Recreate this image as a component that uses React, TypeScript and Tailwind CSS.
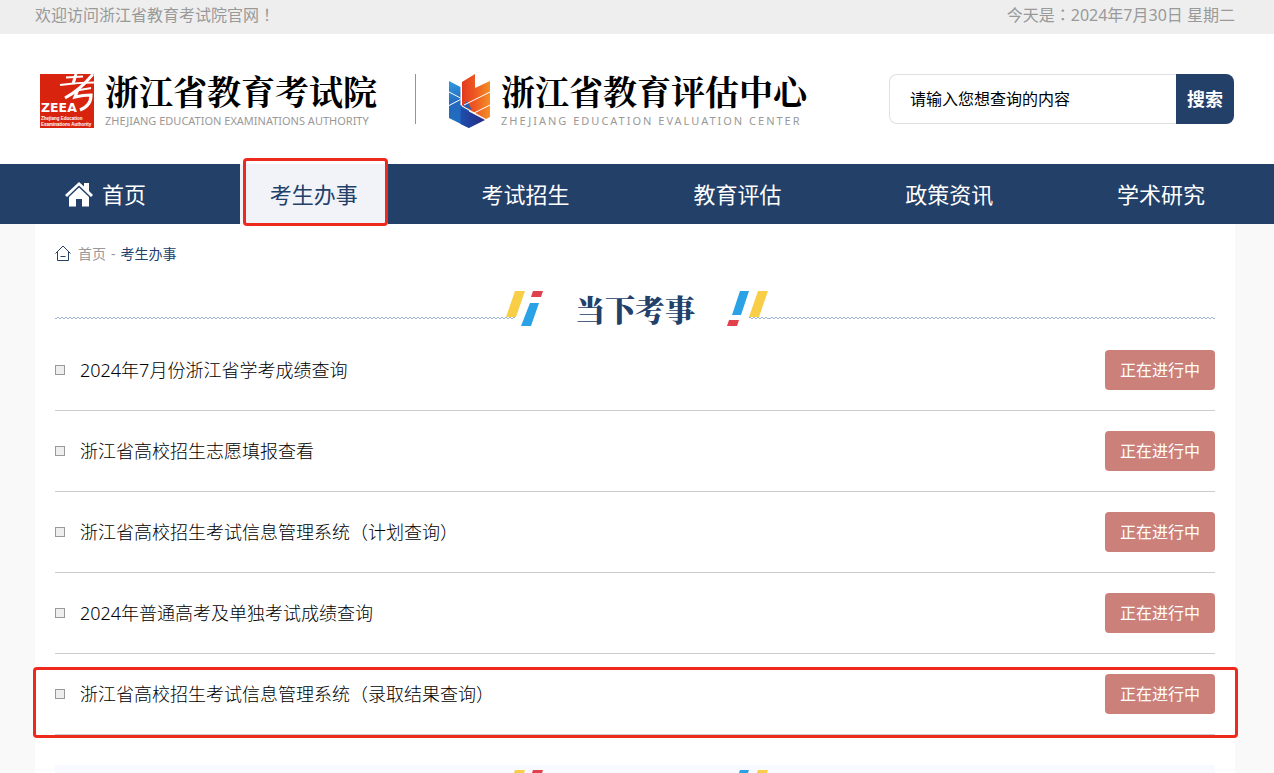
import React from 'react';

const navItems = ['考生办事', '考试招生', '教育评估', '政策资讯', '学术研究'];

const exams = [
  '2024年7月份浙江省学考成绩查询',
  '浙江省高校招生志愿填报查看',
  '浙江省高校招生考试信息管理系统（计划查询）',
  '2024年普通高考及单独考试成绩查询',
  '浙江省高校招生考试信息管理系统（录取结果查询）',
];

const serif = "font-['Noto_Serif_CJK_SC','Noto_Serif_SC','Liberation_Serif','Noto_Sans_CJK_SC',serif]";

function ZeeaLogo() {
  return (
    <svg width="54" height="54" viewBox="0 0 54 54" aria-hidden="true" className="shrink-0">
      <rect width="54" height="54" fill="#d8230f" />
      <g fill="none" stroke="#fff" strokeLinecap="butt">
        <path d="M26 3.500L43 2.500" strokeWidth="1.800" />
        <path d="M20 11C31 9.500 43 8.500 54 8.500" strokeWidth="2" />
        <path d="M36 0L33 10" strokeWidth="3" />
        <path d="M53 0C45 10 36 18 25 24" strokeWidth="3" />
        <path d="M35 17C41 15.500 46 15 51 14" strokeWidth="1.800" />
        <path d="M38 15L35 23C41 21.500 46 21 51 21C51 28 48 33 40 36" strokeWidth="3.200" />
      </g>
      <text x="1" y="38" fill="#fff" fontSize="12.500" fontWeight="700" fontFamily="DejaVu Sans">ZEEA</text>
      <text x="1" y="46" fill="#fff" fontSize="4.500" fontWeight="700" fontFamily="Liberation Sans">Zhejiang Education</text>
      <text x="1" y="52" fill="#fff" fontSize="4.500" fontWeight="700" fontFamily="Liberation Sans">Examinations Authority</text>
    </svg>
  );
}

function CenterLogo() {
  return (
    <svg width="42" height="54" viewBox="0 0 42 54" aria-hidden="true" className="shrink-0">
      <defs>
        <linearGradient id="blueFace" x1="0" y1="7" x2="12" y2="54" gradientUnits="userSpaceOnUse">
          <stop offset="0" stopColor="#2f9be0" />
          <stop offset="0.500" stopColor="#2468bd" />
          <stop offset="1" stopColor="#1d70c4" />
        </linearGradient>
        <linearGradient id="darkFace" x1="12" y1="0" x2="37" y2="0" gradientUnits="userSpaceOnUse">
          <stop offset="0" stopColor="#1f4fae" />
          <stop offset="1" stopColor="#252a80" />
        </linearGradient>
        <linearGradient id="orangeFace" x1="13" y1="0" x2="42" y2="0" gradientUnits="userSpaceOnUse">
          <stop offset="0" stopColor="#e2361f" />
          <stop offset="0.500" stopColor="#ee5a22" />
          <stop offset="1" stopColor="#f58f27" />
        </linearGradient>
      </defs>
      <path d="M1 7L12.500 13V31L21 36V54L1 44Z" fill="url(#blueFace)" />
      <path d="M12.500 33L37 46L21 54L12.500 50Z" fill="url(#darkFace)" />
      <path d="M14 8L27 0V14L42 7V43L37 45.500L15 32.500L14 31Z" fill="url(#orangeFace)" />
      <path d="M15 32L19 27L24 36Z" fill="#2360b5" />
      <path d="M1 18L12.500 24M1 31.500L12.500 25.500M42 18L16 31M42 31L26 39M14 32L38 45.500" stroke="#fff" strokeWidth="1" fill="none" />
    </svg>
  );
}

function LeftMarks() {
  return (
    <svg width="42" height="44" viewBox="0 0 42 44" aria-hidden="true" className="shrink-0">
      <path d="M0 31.500H14" stroke="#9db4d6" strokeDasharray="2 2" />
      <path d="M0 32.500H14" stroke="#9db4d6" strokeDasharray="2 2" strokeDashoffset="2" />
      <path d="M14 5H24L15 31H5Z" fill="#f7ce46" />
      <path d="M32 5H42L40 11H30Z" fill="#e0414b" />
      <path d="M29 17H38L30 40H20Z" fill="#2ba2e6" />
    </svg>
  );
}

function RightMarks() {
  return (
    <svg width="42" height="44" viewBox="0 0 42 44" aria-hidden="true" className="shrink-0">
      <path d="M22 31.500H42" stroke="#9db4d6" strokeDasharray="2 2" />
      <path d="M22 32.500H42" stroke="#9db4d6" strokeDasharray="2 2" strokeDashoffset="2" />
      <path d="M13 5H22L14 29H5Z" fill="#2ba2e6" />
      <path d="M2 34H12L10 40H0Z" fill="#e0414b" />
      <path d="M31 5H41L32 31H22Z" fill="#f7ce46" />
    </svg>
  );
}

function Rule() {
  return (
    <span className="mb-[11px] h-[2px] flex-1 self-end bg-[conic-gradient(#9db4d6_25%,#fff_0_50%,#9db4d6_0_75%,#fff_0)] bg-[length:4px_2px]" />
  );
}

function SectionTitle({ children }: { children?: React.ReactNode }) {
  return (
    <div className="flex h-11 items-center">
      <Rule />
      <LeftMarks />
      <h2 className={`mr-8 ml-8 w-[120px] text-[30px] leading-[44px] font-black whitespace-nowrap text-[#234069] ${serif}`}>{children}</h2>
      <RightMarks />
      <Rule />
    </div>
  );
}

function Mark({ children }: { children: string }) {
  return <span className="font-['Noto_Sans_CJK_TC',sans-serif]" lang="zh-TW">{children}</span>;
}

export default function App() {
  return (
    <div lang="zh-CN" className="h-screen overflow-hidden bg-[#f9f9f9] font-['Noto_Sans','Noto_Sans_CJK_SC',sans-serif] text-black">
      <div className="flex h-[34px] items-center justify-between bg-[#eee] pr-[39px] pb-[6px] pl-[35px] text-base text-[#999]">
        <span>欢迎访问浙江省教育考试院官网<Mark>！</Mark></span>
        <span>今天是<Mark>：</Mark>2024年7月30日 星期二</span>
      </div>

      <header className="flex h-[130px] items-center justify-between bg-white px-10">
        <div className="flex items-center">
          <a href="#zeea" className="flex items-center gap-[11px] pt-1">
            <ZeeaLogo />
            <span className="flex flex-col gap-1">
              <span className={`text-[34px] leading-9 font-bold whitespace-nowrap ${serif}`}>浙江省教育考试院</span>
              <span className="text-[11px] leading-4 whitespace-nowrap text-[#999]">ZHEJIANG EDUCATION EXAMINATIONS AUTHORITY</span>
            </span>
          </a>
          <span className="mr-8 ml-[38px] h-[50px] w-px bg-[#cc7d79]" />
          <a href="#center" className="flex items-center gap-[11px] pt-1">
            <CenterLogo />
            <span className="flex flex-col gap-1">
              <span className={`text-[34px] leading-9 font-bold whitespace-nowrap ${serif}`}>浙江省教育评估中心</span>
              <span className="text-[11px] leading-4 tracking-[2px] whitespace-nowrap text-[#999]">ZHEJIANG EDUCATION EVALUATION CENTER</span>
            </span>
          </a>
        </div>
        <form className="flex h-[50px] w-[345px]">
          <input
            aria-label="查询内容"
            type="text"
            defaultValue="请输入您想查询的内容"
            className="min-w-0 flex-1 rounded-l-lg border border-r-0 border-[#e0e0e0] bg-white pl-5 text-base outline-none"
          />
          <button type="button" className="w-[58px] rounded-r-lg bg-[#234069] text-lg font-bold text-white">搜索</button>
        </form>
      </header>

      <nav className="flex h-[60px] items-stretch justify-between bg-[#234069] pr-[39px] pl-[35px] text-[22px] text-white">
        <a href="#home" className="flex items-center gap-[9px] px-[30px]">
          <svg width="28" height="26" viewBox="0 0 28 26" fill="#fff" aria-hidden="true">
            <path d="M14 1L19 5.500V2H24V10L28 14L26 16L14 4.500L2 16L0 14Z" />
            <path d="M14 6.500L24 16V25.500H17V18H11V25.500H4V16Z" />
          </svg>
          首页
        </a>
        {navItems.map((item, i) => (
          <a
            key={item}
            href={`#nav-${i}`}
            className={i === 0 ? 'relative flex items-center bg-[#f2f3f9] px-[30px] text-[#234069]' : 'flex items-center px-[30px]'}
          >
            {item}
            {i === 0 && (
              <span className="absolute -top-[6px] right-0 -bottom-[2px] left-[3px] rounded-[4px] border-[3px] border-[#ee2a1e]" />
            )}
          </a>
        ))}
      </nav>

      <main className="mr-[39px] ml-[35px] bg-white px-5">
        <div className="mb-[2px] flex h-[60px] items-center text-sm">
          <svg width="16" height="18" viewBox="0 0 16 18" fill="none" stroke="#234069" aria-hidden="true" className="mr-[7px]">
            <path d="M0.500 8.500L8 1L15.500 8.500M2.500 7V15.500H13.500V7M5.500 11.500H10.500" />
          </svg>
          <a href="#home" className="text-[#999]">首页</a>
          <span className="mx-[5px] text-[#999]">-</span>
          <a href="#exam" className="text-[#234069]">考生办事</a>
        </div>

        <SectionTitle>当下考事</SectionTitle>

        <ul>
          {exams.map((exam, i) => (
            <li key={exam} className="relative flex items-center border-b border-[#ccc] py-5">
              <span className="mr-[15px] size-[10px] border border-[#999] bg-[#eee]" />
              <a href={`#exam-${i}`} className="flex-1 text-lg font-light">{exam}</a>
              <button type="button" className="h-10 w-[110px] rounded bg-[#cb807a] text-base text-white">正在进行中</button>
              {i === exams.length - 1 && (
                <span className="pointer-events-none absolute top-[13px] -right-[23px] -bottom-1 -left-[22px] rounded-[4px] border-[3px] border-[#ee2a1e]" />
              )}
            </li>
          ))}
        </ul>

        <section className="mt-[30px] bg-[#f8faff]">
          <SectionTitle />
        </section>
      </main>
    </div>
  );
}
